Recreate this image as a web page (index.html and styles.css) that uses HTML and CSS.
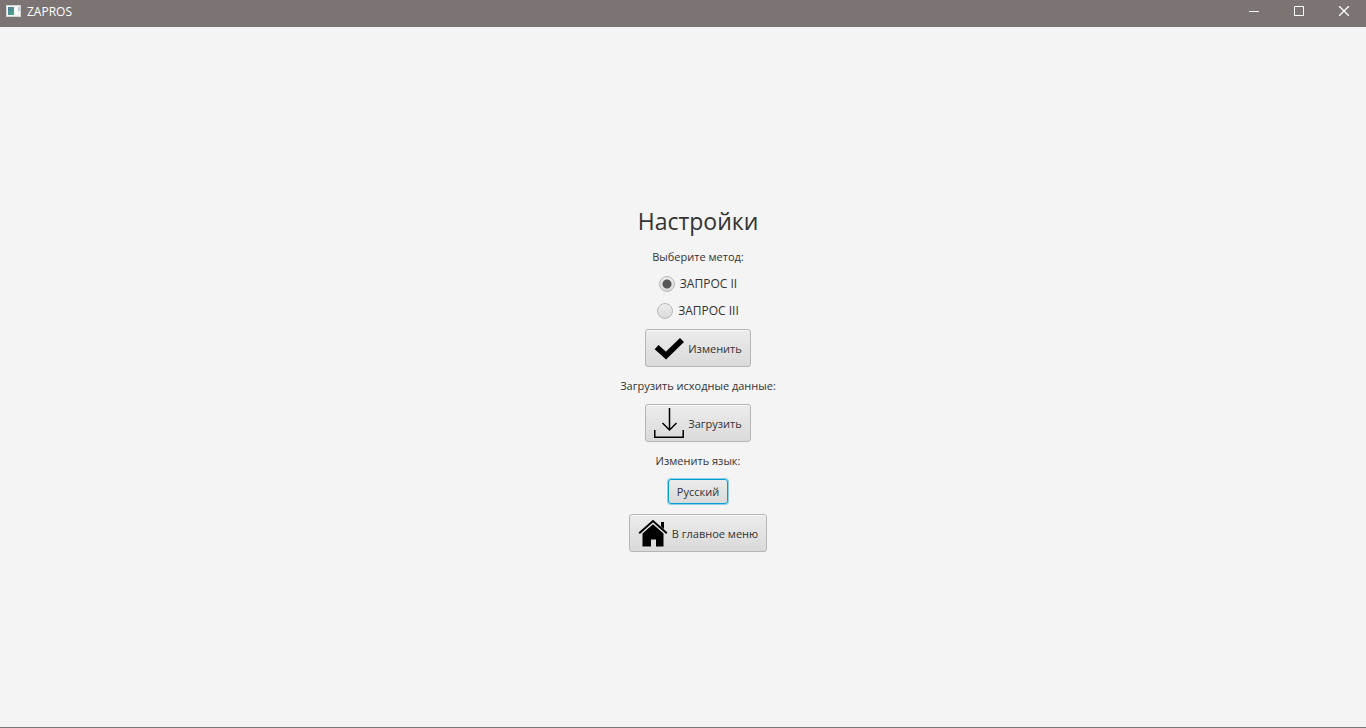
FILE: index.html
```html
<!DOCTYPE html>
<html lang="ru">
<head>
<meta charset="utf-8">
<title>ZAPROS</title>
<link rel="stylesheet" href="styles.css">
</head>
<body>
<header class="titlebar">
  <svg class="app-icon" width="15" height="12" viewBox="0 0 15 12" aria-hidden="true">
    <defs><linearGradient id="g" x1="0" y1="0" x2="1" y2="1"><stop offset="0" stop-color="#4a76a0"/><stop offset="1" stop-color="#4fae7c"/></linearGradient></defs>
    <rect width="15" height="12" fill="#d5d5d5"/>
    <rect x="1" y="1" width="13" height="10" fill="#f5f5f5"/>
    <rect x="2" y="2" width="6" height="8" fill="url(#g)"/>
    <rect x="9" y="2" width="2" height="8" fill="#fff"/>
    <rect x="12" y="2" width="2" height="4" fill="#bfd0df"/>
  </svg>
  <span class="app-name">ZAPROS</span>
  <div class="window-controls">
    <button class="window-button" type="button" aria-label="Свернуть"><svg width="10" height="10" viewBox="0 0 10 10"><path d="M0 5.5H10"/></svg></button>
    <button class="window-button" type="button" aria-label="Развернуть"><svg width="10" height="10" viewBox="0 0 10 10"><path d="M.5 .5H9.5V9.5H.5Z"/></svg></button>
    <button class="window-button" type="button" aria-label="Закрыть"><svg width="10" height="10" viewBox="0 0 10 10"><path d="M0 0L10 10M10 0L0 10" stroke-width="1.3"/></svg></button>
  </div>
</header>
<main class="content">
  <form class="settings">
    <h1 class="title">Настройки</h1>
    <p class="caption">Выберите метод:</p>
    <label class="option"><input class="radio" type="radio" name="method" checked>ЗАПРОС II</label>
    <label class="option"><input class="radio" type="radio" name="method">ЗАПРОС III</label>
    <button class="button" type="button">
      <svg width="30" height="30" viewBox="0 0 30 30" aria-hidden="true"><path d="M2.6 14.2L12 22.6L28 7" fill="none" stroke="#000" stroke-width="5.8"/></svg>
      Изменить
    </button>
    <p class="caption">Загрузить исходные данные:</p>
    <button class="button" type="button">
      <svg width="30" height="30" viewBox="0 0 30 30" aria-hidden="true"><g fill="none" stroke="#000" stroke-width="1.5"><path d="M15.5 0V22M8.5 15L15.5 22L22.5 15"/><path d="M.8 22V29.2H29.2V22"/></g></svg>
      Загрузить
    </button>
    <p class="caption">Изменить язык:</p>
    <button class="button button-small button-focused" type="button">Русский</button>
    <button class="button" type="button">
      <svg width="30" height="30" viewBox="0 0 30 30" aria-hidden="true"><path d="M1.2 15.2L15 3L28.8 15.2" fill="none" stroke="#000" stroke-width="2"/><path d="M23 4H26V11L23 8.5Z"/><path d="M15 6.2L25.5 15.5V28.5H18V21.5H13V28.5H4.5V15.5Z"/></svg>
      В главное меню
    </button>
  </form>
</main>
</body>
</html>
```
FILE: styles.css
```css
* {
  box-sizing: border-box;
}

body {
  margin: 0;
  min-height: 100vh;
  display: flex;
  flex-direction: column;
  background: #f4f4f4;
  border-bottom: 1px solid #7b7473;
  color: #333;
  font: 12px/17px "Open Sans", "Noto Sans", sans-serif;
}

.titlebar {
  display: flex;
  align-items: center;
  height: 27px;
  padding: 0 0 5px 6px;
  background: #7b7473;
  color: #fff;
}

.app-name {
  margin-left: 6px;
}

.window-controls {
  display: flex;
  align-self: stretch;
  margin-left: auto;
}

.window-button {
  display: flex;
  align-items: center;
  justify-content: center;
  width: 45px;
  padding: 0;
  border: 0;
  background: none;
}

.window-button path {
  fill: none;
  stroke: #fff;
}

.content {
  flex: 1;
  display: flex;
  align-items: center;
  justify-content: center;
  padding: 4px 0 0 30px;
}

.settings {
  display: flex;
  flex-direction: column;
  align-items: center;
  gap: 10px;
}

.title {
  margin: 0;
  padding-bottom: 2px;
  font-size: 23px;
  font-weight: 400;
  line-height: 30px;
}

.caption {
  margin: 0;
  font-size: 11px;
}

.option {
  display: flex;
  align-items: center;
  gap: 5px;
}

.radio {
  appearance: none;
  width: 16px;
  height: 16px;
  margin: 0;
  border: 1px solid #b8b8b8;
  border-radius: 50%;
  background: linear-gradient(#ececec, #dadada);
}

.radio:checked {
  background: radial-gradient(circle, #555 4px, transparent 5px), linear-gradient(#ececec, #dadada);
}

.button {
  display: flex;
  align-items: center;
  gap: 4px;
  height: 38px;
  padding: 0 8px;
  border: 1px solid #b5b5b5;
  border-radius: 3px;
  background: linear-gradient(#ececec, #dadada);
  box-shadow: inset 0 1px #f8f8f8;
  color: #333;
  font: inherit;
  font-size: 11px;
}

.button-small {
  height: 25px;
}

.button-focused {
  border-color: #039ed3;
  box-shadow: 0 0 0 1px #8ccfe6;
}
```
